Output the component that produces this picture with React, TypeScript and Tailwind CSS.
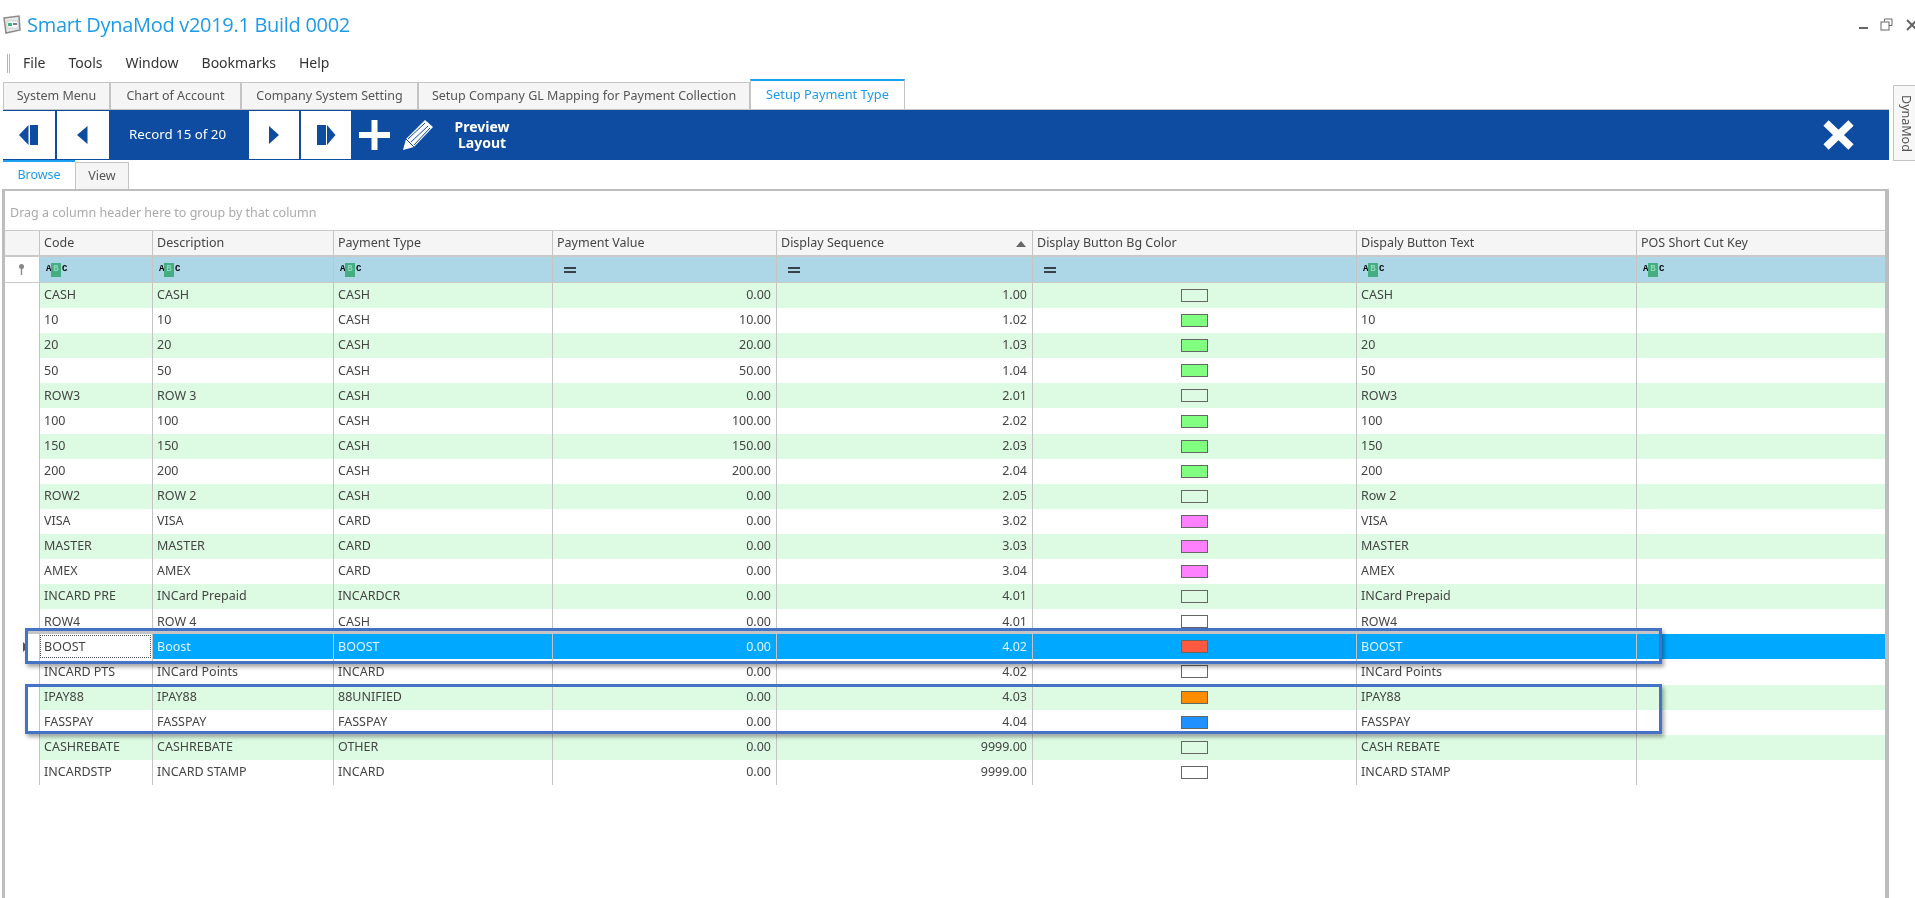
const NAVY = "#0d4ca1";

const columns = [
  { label: "Code", width: "w-[113px]" },
  { label: "Description", width: "w-[181px]" },
  { label: "Payment Type", width: "w-[219px]" },
  { label: "Payment Value", width: "w-[224px]" },
  { label: "Display Sequence", width: "w-[256px]" },
  { label: "Display Button Bg Color", width: "w-[324px]" },
  { label: "Dispaly Button Text", width: "w-[280px]" },
  { label: "POS Short Cut Key", width: "flex-1" },
];

const rows = [
  ["CASH", "CASH", "CASH", "0.00", "1.00", "none", "CASH"],
  ["10", "10", "CASH", "10.00", "1.02", "#80ff80", "10"],
  ["20", "20", "CASH", "20.00", "1.03", "#80ff80", "20"],
  ["50", "50", "CASH", "50.00", "1.04", "#80ff80", "50"],
  ["ROW3", "ROW 3", "CASH", "0.00", "2.01", "none", "ROW3"],
  ["100", "100", "CASH", "100.00", "2.02", "#80ff80", "100"],
  ["150", "150", "CASH", "150.00", "2.03", "#80ff80", "150"],
  ["200", "200", "CASH", "200.00", "2.04", "#80ff80", "200"],
  ["ROW2", "ROW 2", "CASH", "0.00", "2.05", "none", "Row 2"],
  ["VISA", "VISA", "CARD", "0.00", "3.02", "#ff80ff", "VISA"],
  ["MASTER", "MASTER", "CARD", "0.00", "3.03", "#ff80ff", "MASTER"],
  ["AMEX", "AMEX", "CARD", "0.00", "3.04", "#ff80ff", "AMEX"],
  ["INCARD PRE", "INCard Prepaid", "INCARDCR", "0.00", "4.01", "none", "INCard Prepaid"],
  ["ROW4", "ROW 4", "CASH", "0.00", "4.01", "none", "ROW4"],
  ["BOOST", "Boost", "BOOST", "0.00", "4.02", "#ff5a40", "BOOST"],
  ["INCARD PTS", "INCard Points", "INCARD", "0.00", "4.02", "none", "INCard Points"],
  ["IPAY88", "IPAY88", "88UNIFIED", "0.00", "4.03", "#ff8c00", "IPAY88"],
  ["FASSPAY", "FASSPAY", "FASSPAY", "0.00", "4.04", "#1e90ff", "FASSPAY"],
  ["CASHREBATE", "CASHREBATE", "OTHER", "0.00", "9999.00", "none", "CASH REBATE"],
  ["INCARDSTP", "INCARD STAMP", "INCARD", "0.00", "9999.00", "none", "INCARD STAMP"],
];

function AbcIcon() {
  return (
    <div className="flex items-center font-['Liberation_Mono',monospace] text-[9px] font-bold leading-none text-black">
      <span className="w-[5px]">A</span>
      <span className="flex h-[14px] w-[10px] items-center justify-center bg-[#45ad82] text-[#8fd6b8]">B</span>
      <span className="ml-[1px] w-[5px]">C</span>
    </div>
  );
}

function EqualsIcon() {
  return (
    <div className="flex w-[12px] flex-col gap-[2px]">
      <div className="h-[2px] bg-[#39424a]" />
      <div className="h-[2px] bg-[#39424a]" />
    </div>
  );
}

function NavButton({ width, children }: { width: string; children: React.ReactNode }) {
  return (
    <div className={`flex h-[48px] items-center justify-center bg-white ${width}`}>
      <svg width="20" height="20" viewBox="0 0 20 20" fill={NAVY}>
        {children}
      </svg>
    </div>
  );
}

function Tab({ label, width }: { label: string; width: string }) {
  return (
    <div className={`flex h-[27px] items-center justify-center border border-b-0 border-[#c4c4c4] bg-[#f5f5f5] text-[#555] ${width}`}>
      {label}
    </div>
  );
}

export default function App() {
  return (
    <div className="relative h-[898px] w-[1915px] overflow-hidden bg-white font-['Noto_Sans',sans-serif] text-[12.5px] text-[#444] blur-[0.35px]">
      {/* title bar */}
      <div className="flex h-[50px] items-center pl-[3px] pb-[1px]">
        <svg width="19" height="20" viewBox="0 0 19 20" className="mr-[5px]">
          <path d="M1 3 L16 1 L17 15 L3 18 Z" fill="#e8e8e8" stroke="#8a8a8a" strokeWidth="1.5" />
          <rect x="4" y="6" width="11" height="7" fill="#fff" stroke="#aaa" strokeWidth="0.5" />
          <rect x="5" y="8" width="4" height="3" fill="#3cb878" />
          <rect x="10" y="8" width="4" height="2" fill="#6a7f96" />
        </svg>
        <div className="font-['Open_Sans',sans-serif] text-[20px] leading-none tracking-[-0.3px] text-[#1e9be8]">
          Smart DynaMod v2019.1 Build 0002
        </div>
        <div className="ml-auto flex items-center">
          <div className="mt-[7px] h-[2px] w-[9px] bg-[#666]" />
          <svg width="13" height="13" viewBox="0 0 13 13" fill="none" stroke="#666" className="ml-[12px]">
            <path d="M4.5 3.5 V1 H12 V7.5 H9" />
            <rect x="1" y="4" width="8" height="8" />
          </svg>
          <svg width="12" height="12" viewBox="0 0 12 12" stroke="#666" strokeWidth="2" className="ml-[13px] mr-[-3px]">
            <path d="M1 1 L11 11 M11 1 L1 11" />
          </svg>
        </div>
      </div>

      {/* menu bar */}
      <div className="flex h-[30px] items-start text-[14px] text-[#333]">
        <div className="ml-[7px] mt-[4px] h-[19px] w-[3px] border-x border-[#b5b5b5]" />
        <div className="ml-[13px] flex gap-[23px] pt-[2px]">
          <span>File</span>
          <span>Tools</span>
          <span>Window</span>
          <span>Bookmarks</span>
          <span>Help</span>
        </div>
      </div>

      <div className="flex h-[818px]">
        <div className="ml-[3px] flex w-[1887px] flex-col">
          {/* document tabs */}
          <div className="flex h-[30px] items-end border-b border-[#c4c4c4]">
            <Tab label="System Menu" width="w-[107px]" />
            <Tab label="Chart of Account" width="w-[131px]" />
            <Tab label="Company System Setting" width="w-[177px]" />
            <Tab label="Setup Company GL Mapping for Payment Collection" width="w-[332px]" />
            <div className="flex h-[30px] w-[155px] items-center justify-center border-x border-t-2 border-x-[#c4c4c4] border-t-[#1ea0f0] bg-white text-[12.8px] text-[#1e9be8]">
              Setup Payment Type
            </div>
          </div>

          {/* record toolbar */}
          <div className="flex h-[50px] items-center bg-[#0d4ca1] text-white">
            <NavButton width="w-[52px]">
              <path d="M9.5 0 V20 L0 10 Z" />
              <rect x="11" y="0" width="8" height="20" />
            </NavButton>
            <NavButton width="ml-[2px] w-[52px]">
              <path d="M14.5 1 V19 L4 10 Z" />
            </NavButton>
            <div className="w-[140px] pr-[3px] text-center text-[13.3px]">Record 15 of 20</div>
            <NavButton width="w-[50px]">
              <path d="M5 1 V19 L15 10 Z" />
            </NavButton>
            <NavButton width="ml-[2px] w-[50px]">
              <rect x="1" y="0" width="9" height="20" />
              <path d="M11 0 V20 L19.5 10 Z" />
            </NavButton>
            <svg width="31" height="30" viewBox="0 0 31 30" fill="white" className="ml-[8px]">
              <rect x="12.5" y="0" width="6" height="30" />
              <rect x="0" y="12" width="31" height="6" />
            </svg>
            <svg width="31" height="30" viewBox="0 0 31 30" className="ml-[12px]">
              <path d="M23 0 L31 7 L12 27 L1 30 L4 19 Z" fill="white" />
              <path d="M6 19 L23 3 M9 22 L26 6 M12 25 L28 8" stroke="#0d4ca1" strokeWidth="1" />
              <path d="M4 19 L12 27" stroke="#0d4ca1" strokeWidth="1" />
            </svg>
            <div className="ml-[17px] w-[64px] text-center text-[14px] font-bold leading-[16px]">
              Preview
              <br />
              Layout
            </div>
            <svg width="31" height="30" viewBox="0 0 31 30" stroke="white" strokeWidth="7.5" className="ml-auto mr-[35px]">
              <path d="M3 3 L28 27 M28 3 L3 27" />
            </svg>
          </div>

          {/* browse / view tabs */}
          <div className="flex h-[29px] items-end">
            <div className="flex h-[29px] w-[72px] items-center justify-center border-t-2 border-[#1ea0f0] bg-white text-[#1e9be8]">
              Browse
            </div>
            <div className="flex h-[27px] w-[54px] items-center justify-center border border-b-0 border-[#c4c4c4] bg-[#f5f5f5] text-[#555]">
              View
            </div>
          </div>

          {/* grid panel */}
          <div className="-ml-[1px] flex flex-1 flex-col border-t-[2px] border-r-[4px] border-l-[3px] border-[#bdbdbd]">
            <div className="flex h-[40px] items-center border-b border-[#c9c9c9] pl-[5px] pt-[5px] text-[#aaa]">
              Drag a column header here to group by that column
            </div>

            <div className="flex h-[26px] border-b-2 border-[#c9c9c9] bg-[#f5f5f5]">
              <div className="w-[34px]" />
              {columns.map((col) => (
                <div key={col.label} className={`relative flex items-center border-l border-[#c4c4c4] pl-[4px] ${col.width}`}>
                  {col.label}
                  {col.label === "Display Sequence" && (
                    <div className="absolute right-[6px] top-[10px] h-0 w-0 border-x-[5px] border-b-[6px] border-x-transparent border-b-[#666]" />
                  )}
                </div>
              ))}
            </div>

            <div className="flex h-[26px] border-b border-[#c9c9c9]">
              <div className="flex w-[34px] items-center justify-center pr-[1px]">
                <svg width="7" height="11" viewBox="0 0 7 11" fill="#888">
                  <circle cx="3.5" cy="2.5" r="2.5" />
                  <rect x="2.8" y="4" width="1.4" height="7" />
                </svg>
              </div>
              {columns.map((col, i) => (
                <div key={col.label} className={`flex items-center border-l border-[#c4c4c4] bg-[#add6e6] pl-[6px] ${col.width}`}>
                  {i === 3 || i === 4 || i === 5 ? <div className="ml-[5px]"><EqualsIcon /></div> : <AbcIcon />}
                </div>
              ))}
            </div>

            {rows.map((row, r) => {
              const selected = row[0] === "BOOST";
              const rowBg = selected ? "bg-[#00a8ff] text-[#e4f4ff]" : r % 2 === 0 ? "bg-[#ddfbe3]" : "bg-white";
              return (
                <div key={row[0]} className="flex h-[25.1px] leading-none">
                  <div className="flex w-[34px] items-center justify-end bg-white">
                    {selected && (
                      <div className="mr-[11px] h-0 w-0 border-y-[5px] border-l-[5px] border-y-transparent border-l-[#555]" />
                    )}
                  </div>
                  {columns.map((col, c) => {
                    if (c === 0 && selected) {
                      return (
                        <div key={col.label} className={`flex items-center border-l border-[#c4c4c4] bg-white pl-[4px] text-[#444] outline-1 -outline-offset-2 outline-dotted outline-[#555] ${col.width}`}>
                          {row[0]}
                        </div>
                      );
                    }
                    if (c === 5) {
                      return (
                        <div key={col.label} className={`flex items-center justify-center border-l border-[#c4c4c4] ${rowBg} ${col.width}`}>
                          <div
                            className="h-[13px] w-[27px] border border-[#666]"
                            style={{ backgroundColor: row[5] === "none" ? "transparent" : row[5] }}
                          />
                        </div>
                      );
                    }
                    const value = c === 7 ? "" : c === 6 ? row[6] : row[c];
                    return (
                      <div
                        key={col.label}
                        className={`flex items-center border-l border-[#c4c4c4] ${c === 3 || c === 4 ? "justify-end pr-[5px]" : "pl-[4px]"} ${rowBg} ${col.width}`}
                      >
                        {value}
                      </div>
                    );
                  })}
                </div>
              );
            })}
          </div>
        </div>

        {/* docked side tab */}
        <div className="ml-[4px] flex-1 pt-[5px]">
          <div className="flex h-[76px] items-center justify-center border border-r-0 border-[#c4c4c4] bg-[#f7f7f7] pl-[2px] text-[12.5px] text-[#555] [writing-mode:vertical-rl]">
            DynaMod
          </div>
        </div>
      </div>

      {/* annotation boxes drawn over the grid */}
      <div className="absolute left-[25px] top-[628px] h-[36px] w-[1637px] border-[3px] border-[#4472c4] shadow-[2px_3px_4px_rgba(0,0,0,0.35)]">
        <div className="h-[3px] bg-[#c4c4c4]" />
      </div>
      <div className="absolute left-[25px] top-[684px] h-[50px] w-[1637px] border-[3px] border-[#4472c4] shadow-[2px_3px_4px_rgba(0,0,0,0.35)]" />
    </div>
  );
}
